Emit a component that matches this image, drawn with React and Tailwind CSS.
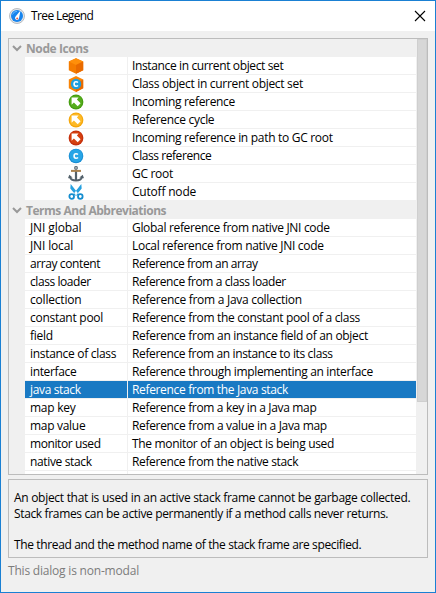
const Cube = () => (
  <svg width="16" height="16" viewBox="0 0 16 16">
    <path d="M8 .2 15.200 3.600v8.600L8 15.800.8 12.200V3.600z" fill="#f57c00" />
    <path d="M8 .2 15.200 3.600 8 7 .8 3.600z" fill="#ff8f0a" />
    <path d="M8 7 15.200 3.600v8.600L8 15.800z" fill="#e96a00" />
  </svg>
);

const ClassCube = () => (
  <svg width="16" height="16" viewBox="0 0 16 16">
    <path d="M8 0 15.200 3.600v8.600L8 16 .8 12.200V3.600z" fill="#f98406" />
    <path d="M8 8 15.200 3.600v8.600L8 16z" fill="#e96a00" />
    <circle cx="8" cy="8" r="5.200" fill="#1e9fe0" />
    <path d="M10 6.500C9.300 5.900 8.700 5.800 8 5.800 6.800 5.800 6.100 6.600 6.100 8s.7 2.200 1.900 2.200c.7 0 1.300-.1 2-.7" fill="none" stroke="#fff" strokeWidth="1.600" />
  </svg>
);

const ClassDot = () => (
  <svg width="16" height="16" viewBox="0 0 16 16">
    <circle cx="8" cy="8" r="7.300" fill="#168bd2" />
    <circle cx="8" cy="7.700" r="6.500" fill="#28a5e6" />
    <path d="M10 6.500C9.300 5.900 8.700 5.800 8 5.800 6.800 5.800 6.100 6.600 6.100 8s.7 2.200 1.900 2.200c.7 0 1.300-.1 2-.7" fill="none" stroke="#fff" strokeWidth="1.600" />
  </svg>
);

const ArrowDot = ({ rim, fill }) => (
  <svg width="16" height="16" viewBox="0 0 16 16">
    <circle cx="8" cy="8" r="7.400" fill={rim} />
    <circle cx="8" cy="7.800" r="6.300" fill={fill} />
    <path d="M3.600 3.600h7L8.900 5.500l3.700 3.800-2.900 2.900-3.800-3.700-2.300 2.200z" fill="#fff" />
  </svg>
);

const Anchor = () => (
  <svg width="16" height="16" viewBox="0 0 16 16" fill="none">
    <path d="M8 3.500v11" stroke="#53616b" strokeWidth="2.200" />
    <circle cx="8" cy="1.900" r="1.300" stroke="#66737b" strokeWidth="1.300" />
    <path d="M3 4.900h10" stroke="#a9824f" strokeWidth="2" />
    <path d="M1.800 11c.7 2.300 3 3.500 6.200 3.500s5.500-1.200 6.200-3.500" stroke="#53616b" strokeWidth="2" />
    <path d="M0 12.300 1.300 8.800l3.300 2.600zM16 12.300 14.700 8.800l-3.300 2.600z" fill="#53616b" />
  </svg>
);

const Scissors = () => (
  <svg width="16" height="16" viewBox="0 0 16 16">
    <path d="M2.700 0 10.700 10.300 8.300 11.800 2.300 4.500zM13.300 0 5.300 10.300 7.700 11.800 13.700 4.500z" fill="#25a0df" />
    <circle cx="3.700" cy="12.500" r="2.300" fill="none" stroke="#148dcf" strokeWidth="1.800" />
    <circle cx="12.300" cy="12.500" r="2.300" fill="none" stroke="#148dcf" strokeWidth="1.800" />
  </svg>
);

const AppIcon = () => (
  <svg width="16" height="16" viewBox="0 0 16 16">
    <circle cx="8" cy="8" r="7.500" fill="#e4e7ea" stroke="#a9adb2" strokeWidth=".8" />
    <circle cx="8" cy="8" r="6" fill="#1684ee" />
    <path d="M3.500 6.500A4.700 4.700 0 0 1 8 3.300" stroke="#69b7fb" fill="none" />
    <path d="M11.500 2.500 10 10.300a2 2 0 1 1-3.400-1.700z" fill="#fff" />
    <circle cx="8.200" cy="10.500" r="1" fill="#e85b45" />
  </svg>
);

const nodes = [
  [<Cube />, 'Instance in current object set', 'tracking-[-0.37px]'],
  [<ClassCube />, 'Class object in current object set', 'tracking-[-0.31px]'],
  [<ArrowDot rim="#459d10" fill="#55ad1c" />, 'Incoming reference', 'tracking-[-0.32px]'],
  [<ArrowDot rim="#f5a60a" fill="#fdb927" />, 'Reference cycle', 'tracking-[-0.3px]'],
  [<ArrowDot rim="#c42f0c" fill="#d5400f" />, 'Incoming reference in path to GC root', 'tracking-[-0.3px]'],
  [<ClassDot />, 'Class reference', 'tracking-[-0.43px]'],
  [<Anchor />, 'GC root', 'tracking-[-0.3px]'],
  [<Scissors />, 'Cutoff node', 'tracking-[-0.2px]'],
];

const terms = [
  ['JNI global', 'Global reference from native JNI code', 'tracking-[-0.1px]', 'tracking-[-0.32px]'],
  ['JNI local', 'Local reference from native JNI code', 'tracking-[-0.15px]', 'tracking-[-0.3px]'],
  ['array content', 'Reference from an array', 'tracking-[-0.4px]', 'tracking-[-0.46px]'],
  ['class loader', 'Reference from a class loader', 'tracking-[-0.43px]', 'tracking-[-0.41px]'],
  ['collection', 'Reference from a Java collection', 'tracking-[-0.2px]', 'tracking-[-0.28px]'],
  ['constant pool', 'Reference from the constant pool of a class', 'tracking-[-0.27px]', 'tracking-[-0.33px]'],
  ['field', 'Reference from an instance field of an object', 'tracking-[-0.3px]', 'tracking-[-0.32px]'],
  ['instance of class', 'Reference from an instance to its class', 'tracking-[-0.3px]', 'tracking-[-0.36px]'],
  ['interface', 'Reference through implementing an interface', 'tracking-[-0.35px]', 'tracking-[-0.33px]'],
  ['java stack', 'Reference from the Java stack', 'tracking-[-0.35px]', 'tracking-[-0.34px]'],
  ['map key', 'Reference from a key in a Java map', 'tracking-[-0.25px]', 'tracking-[-0.34px]'],
  ['map value', 'Reference from a value in a Java map', 'tracking-[-0.3px]', 'tracking-[-0.33px]'],
  ['monitor used', 'The monitor of an object is being used', 'tracking-[-0.4px]', 'tracking-[-0.32px]'],
  ['native stack', 'Reference from the native stack', 'tracking-[-0.35px]', 'tracking-[-0.36px]'],
  ['', '', '', ''],
];

const Group = ({ title, tracking }) => (
  <div className="flex h-[18px] shrink-0 items-center bg-[#f0f0f0] font-bold text-[#999]">
    <svg className="ml-[3px] mr-1" width="10" height="7" viewBox="0 0 10 7">
      <path d="M1 1 5 5 9 1" fill="none" stroke="#999" strokeWidth="2" />
    </svg>
    <span className={`pt-[2px] ${tracking}`}>{title}</span>
  </div>
);

const Row = ({ label, text, icon, selected, labelTracking = '', textTracking }) => (
  <div className="flex h-[18px] shrink-0 pl-4">
    <div className={`mb-px mr-px flex w-[102px] items-center ${icon ? 'justify-center' : 'pl-[5px]'} ${selected ? 'bg-[#1979c3] text-white' : 'bg-white'}`}>
      {icon ? <span className="-mb-px">{label}</span> : <span className={`pt-px ${labelTracking}`}>{label}</span>}
    </div>
    <div className={`mb-px mr-px flex flex-1 items-center pl-1 ${selected ? 'bg-[#1979c3] text-white' : 'bg-white'}`}>
      <span className={`pt-px ${textTracking}`}>{text}</span>
    </div>
  </div>
);

export default function App() {
  return (
    <div className="flex h-[593px] w-[436px] flex-col whitespace-nowrap border border-[#1a80d3] bg-[#f0f0f0] font-['Open_Sans','Noto_Sans',sans-serif] text-[12px] leading-[16px] text-black">
      <header className="flex h-[30px] shrink-0 items-center bg-white pl-2 pr-[9px]">
        <AppIcon />
        <span className="ml-[6px] tracking-[-0.62px]">Tree Legend</span>
        <svg className="ml-auto" width="12" height="12" viewBox="0 0 12 12">
          <path d="M1 1l10 10M11 1 1 11" stroke="#000" strokeWidth="1.100" />
        </svg>
      </header>
      <main className="ml-[7px] mt-[7px] flex h-[437px] w-[420px] shrink-0 overflow-hidden border border-[#bcbcbc]">
        <div className="flex flex-1 flex-col overflow-hidden">
          <Group title="Node Icons" tracking="tracking-[-0.4px]" />
          {nodes.map(([icon, text, tracking]) => (
            <Row key={text} label={icon} text={text} icon textTracking={tracking} />
          ))}
          <Group title="Terms And Abbreviations" tracking="tracking-[-0.48px]" />
          {terms.map(([label, text, labelTracking, textTracking]) => (
            <Row
              key={label}
              label={label}
              text={text}
              selected={label === 'java stack'}
              labelTracking={labelTracking}
              textTracking={textTracking}
            />
          ))}
        </div>
        <div className="w-[10px] bg-[#f0f0f0]">
          <div className="h-[363px] border border-[#cfcfcf] bg-[#d7d7d7]" />
        </div>
      </main>
      <section className="ml-[7px] mt-1 h-[79px] w-[420px] shrink-0 border border-[#bcbcbc] pl-[5px] pt-[10px]">
        <p className="tracking-[-0.29px]">An object that is used in an active stack frame cannot be garbage collected.</p>
        <p className="tracking-[-0.35px]">Stack frames can be active permanently if a method calls never returns.</p>
        <p className="mt-[15px] tracking-[-0.37px]">The thread and the method name of the stack frame are specified.</p>
      </section>
      <footer className="ml-[7px] mt-[5px] tracking-[-0.2px] text-[#7c7c7c]">This dialog is non-modal</footer>
    </div>
  );
}
